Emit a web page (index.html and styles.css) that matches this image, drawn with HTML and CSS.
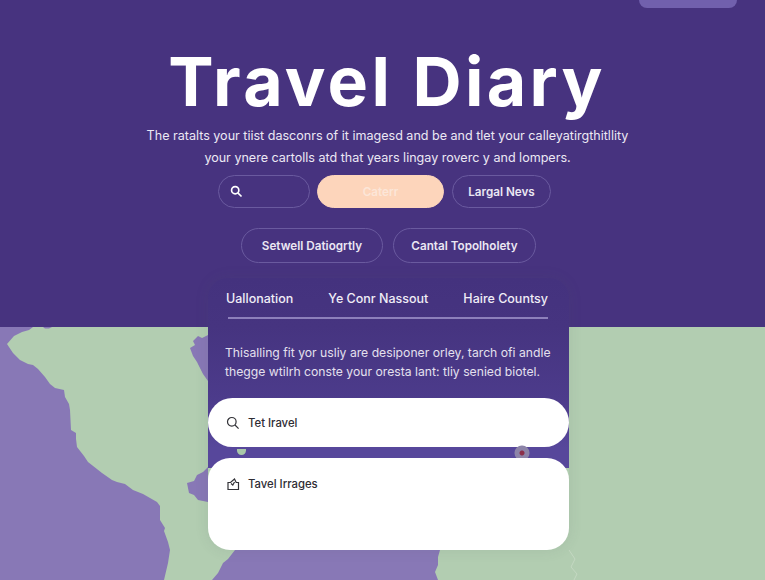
FILE: index.html
```html
<!DOCTYPE html>
<html lang="en">
<head>
<meta charset="utf-8">
<title>Travel Diary</title>
<link rel="stylesheet" href="styles.css">
</head>
<body>
<div class="page">
  <section class="hero">
    <div class="topbar"><span class="top-pill"></span></div>
    <h1 class="title">Travel Diary</h1>
    <p class="lead">The ratalts your tiist dasconrs of it imagesd and be and tlet your calleyatirgthitllity<br>your ynere cartolls atd that years lingay roverc y and lompers.</p>
    <div class="pill-row first">
      <div class="pill search-pill">
        <svg class="pill-icon" viewBox="0 0 14 14"><circle cx="5.6" cy="5.6" r="3.9"/><path d="M8.4 8.4 12.4 12.4"/></svg>
      </div>
      <div class="pill peach">Caterr</div>
      <div class="pill news">Largal Nevs</div>
    </div>
    <div class="pill-row second">
      <div class="pill tall wide-a">Setwell Datiogrtly</div>
      <div class="pill tall wide-b">Cantal Topolholety</div>
    </div>
  </section>
  <section class="map">
    <svg class="map-art" viewBox="0 0 765 253" preserveAspectRatio="none">
      <path class="land-purple" d="M0 0H33L29 3 22 5 14 9 7 17 13 26 20 33 28 37 33 38 38 42 45 50 50 57 55 61 64 63 65 70 69 77 70 83 71 103 76 106 76 112 77 120 84 129 88 135 102 146 112 153 117 155 125 157 133 163 143 167 157 175 160 179 160 193 165 201 164 204 168 215 170 223 168 236 164 253H0Z"/>
      <path class="land-purple" d="M43 0H52L49 1.5H45Z"/>
      <path class="land-purple" d="M208 8 202 11 198 9 193 14 195 18 190 21 193 29 197 35 203 47 208 54Z"/>
      <path class="land-purple" d="M208 140 203 145 197 148 194 154 187 156 189 166 194 168 198 173 208 175Z"/>
      <path class="land-purple" d="M235 223 228 232 223 236 218 246 212 253H438L435 245 438 238 438 230 440 223Z"/>
      <path class="coast-line" d="M569 223 575 232 571 240 577 247 574 253"/>
    </svg>
  </section>
  <div class="panel">
    <nav class="tabs">
      <span>Uallonation</span>
      <span>Ye Conr Nassout</span>
      <span>Haire Countsy</span>
    </nav>
    <p class="panel-text">Thisalling fit yor usliy are desiponer orley, tarch ofi andle<br>thegge wtilrh conste your oresta lant: tliy senied biotel.</p>
    <div class="card search-card">
      <svg class="card-icon" viewBox="0 0 14 14"><circle cx="5.8" cy="5.8" r="4.3"/><path d="M9 9 12.6 12.6"/></svg>
      <span>Tet Iravel</span>
    </div>
    <div class="gap-strip"><span class="blob"></span><span class="pin"></span></div>
    <div class="card image-card">
      <svg class="card-icon" viewBox="0 0 14 14"><path d="M2 5.5H4.5L8.5 2 10.2 5.5H12.5V12.5H2Z"/><path d="M5 6.5 6.8 8 8.5 5"/></svg>
      <span>Tavel Irrages</span>
    </div>
  </div>
</div>
</body>
</html>
```
FILE: styles.css
```css
* { box-sizing: border-box; }
html, body { margin: 0; height: 100%; overflow: hidden; }
body { font-family: Inter, "Liberation Sans", sans-serif; background: #47337f; }
.page { position: relative; width: 765px; height: 580px; overflow: hidden; }
.hero { height: 327px; background: #47337f; display: flex; flex-direction: column; align-items: center; color: #fff; }
.topbar { width: 100%; height: 8px; display: flex; justify-content: flex-end; padding-right: 28px; }
.top-pill { width: 98px; height: 8px; background: #7160ad; border-radius: 0 0 10px 10px; }
.title { margin: 31px 0 0 9px; font-size: 68px; line-height: 84px; font-weight: 700; letter-spacing: 3.3px; white-space: nowrap; color: #fff; }
.lead { margin: 2px 0 0 10px; font-size: 12.55px; line-height: 22px; text-align: center; color: #ece8f4; white-space: nowrap; }
.pill-row { display: flex; justify-content: center; }
.pill-row.first { margin: 6px 0 0 4px; gap: 7px; }
.pill-row.second { margin: 20px 0 0 12px; gap: 10px; }
.pill { height: 33px; border: 1px solid #6a5a9f; border-radius: 17px; display: flex; align-items: center; justify-content: center; font-size: 11.7px; font-weight: 600; color: #ebe7f3; white-space: nowrap; }
.pill.tall { height: 35px; border-radius: 18px; }
.search-pill { width: 92px; justify-content: flex-start; padding-left: 11px; }
.pill-icon { width: 13px; height: 13px; fill: none; stroke: #fff; stroke-width: 1.8; }
.peach { width: 127px; background: #fdd5bb; border-color: #fdd5bb; color: #fce6d8; }
.news { width: 99px; margin-left: 1px; }
.wide-a { width: 142px; }
.wide-b { width: 143px; }
.map { height: 253px; background: #b2cdb1; }
.map-art { display: block; width: 100%; height: 100%; }
.land-purple { fill: #8878b6; }
.coast-line { fill: none; stroke: #c4d8c2; stroke-width: 1; }
.panel { position: absolute; left: 208px; top: 278px; width: 361px; height: 272px; border-radius: 20px 20px 22px 22px; background: linear-gradient(#44327e 0, #463480 49px, #4c3b8b 120px, #57479b 170px, #57479b 190px, transparent 190px); box-shadow: 0 0 14px rgba(70, 90, 90, 0.12); display: flex; flex-direction: column; }
.tabs { height: 41px; margin: 0 21px 0 20px; border-bottom: 2px solid #8d80bb; display: flex; justify-content: space-between; align-items: center; padding-top: 2px; font-size: 12.5px; font-weight: 500; color: #f0edf6; white-space: nowrap; }
.tabs span:first-child { margin-left: -2px; }
.panel-text { margin: 24px 0 0; padding-left: 17px; font-size: 12.2px; line-height: 19px; color: #e4e0ee; white-space: nowrap; }
.card { background: #fff; color: #2e2c33; display: flex; align-items: center; font-size: 11.3px; font-weight: 500; padding-left: 18px; gap: 8px; }
.card-icon { width: 14px; height: 14px; fill: none; stroke: #333338; stroke-width: 1.2; flex: none; }
.search-card { margin-top: 17px; height: 49px; border-radius: 25px; }
.gap-strip { height: 11px; display: flex; justify-content: space-between; align-items: center; }
.blob { width: 9px; height: 6px; margin: -2px 0 0 29px; background: #a9c8a9; border-radius: 0 0 5px 5px; }
.pin { width: 16px; height: 16px; margin-right: 39px; background: radial-gradient(circle, #8b2f4a 0 2px, #8d84a8 3px 7px, transparent 8px); border-radius: 50%; }
.image-card { height: 92px; border-radius: 22px; align-items: flex-start; padding-top: 19px; }
```
